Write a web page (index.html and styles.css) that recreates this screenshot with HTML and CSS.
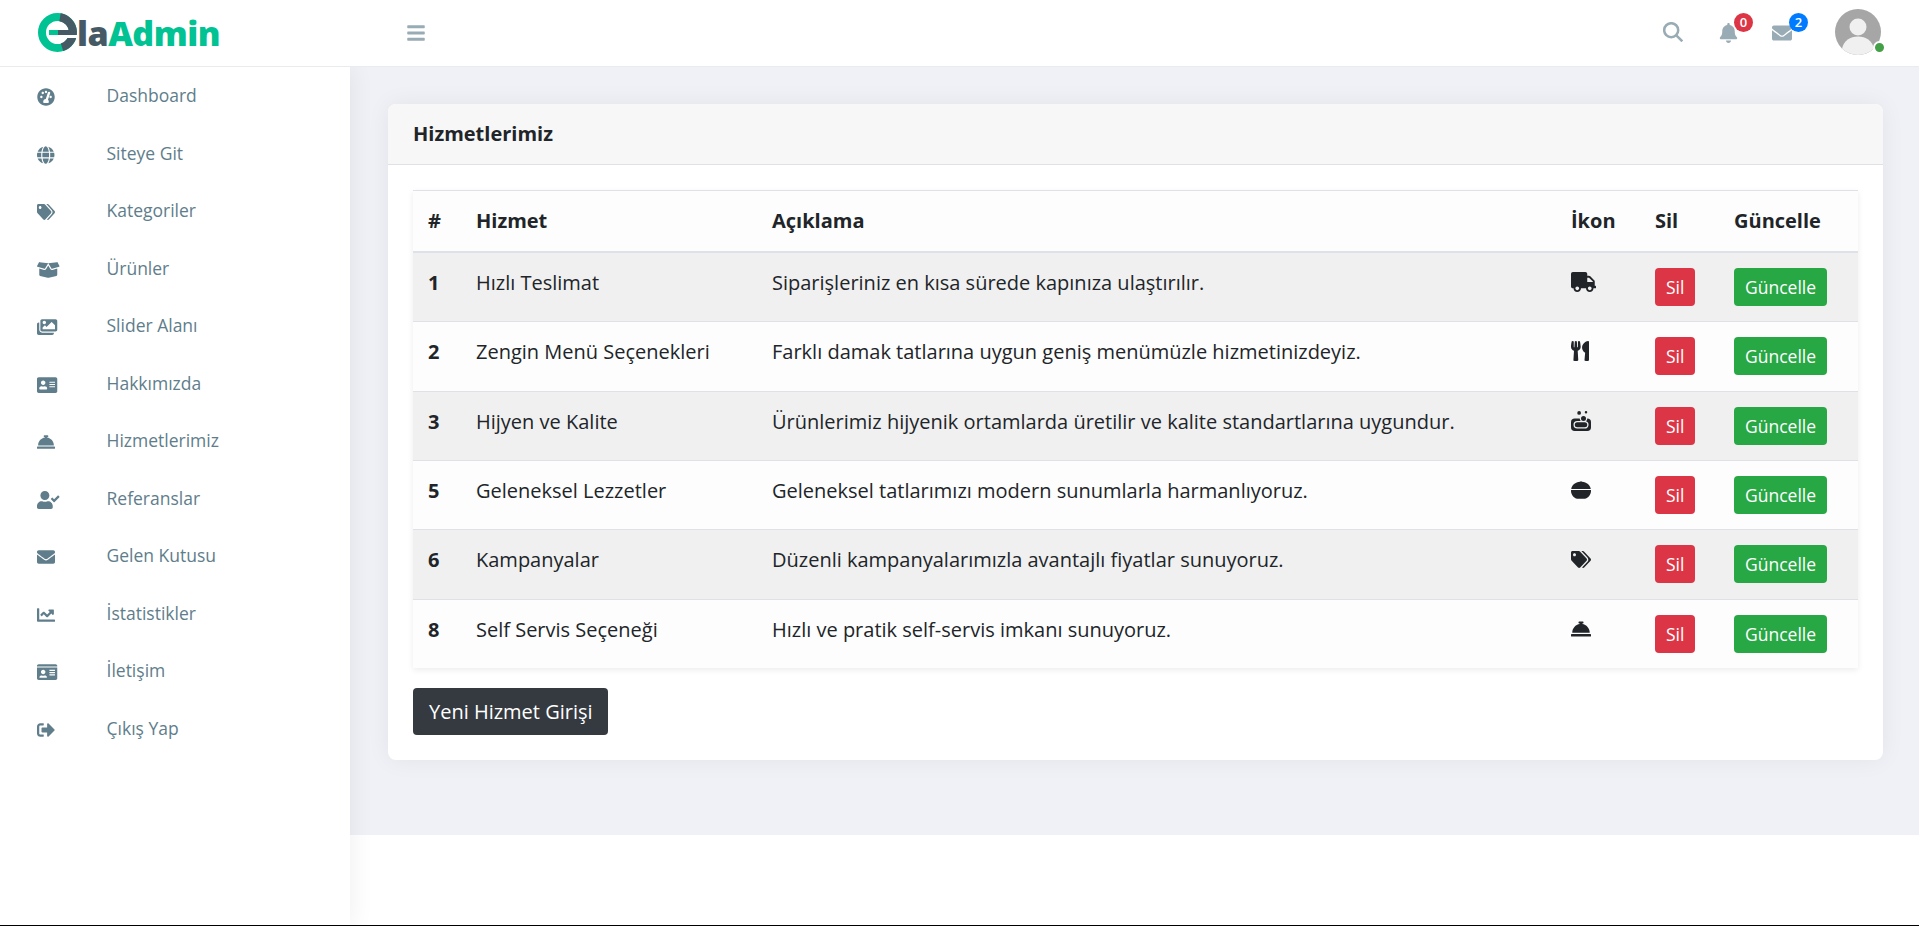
FILE: index.html
```html
<!DOCTYPE html>
<html lang="tr">
<head>
    <meta charset="UTF-8">
    <meta name="viewport" content="width=device-width, initial-scale=1.0">
    <title>Hizmetlerimiz - ElaAdmin</title>
    <link rel="stylesheet" href="styles.css">
</head>
<body>
    <svg class="icon-defs" xmlns="http://www.w3.org/2000/svg">
        <symbol id="i-bars" viewBox="0 0 448 512"><path d="M16 132h416c8.8 0 16-7.2 16-16V76c0-8.8-7.2-16-16-16H16C7.2 60 0 67.2 0 76v40c0 8.8 7.2 16 16 16zm0 160h416c8.8 0 16-7.2 16-16v-40c0-8.8-7.2-16-16-16H16c-8.8 0-16 7.2-16 16v40c0 8.8 7.2 16 16 16zm0 160h416c8.8 0 16-7.2 16-16v-40c0-8.8-7.2-16-16-16H16c-8.8 0-16 7.2-16 16v40c0 8.8 7.2 16 16 16z"/></symbol>
        <symbol id="i-bell" viewBox="0 0 448 512"><path d="M224 512c35.32 0 63.97-28.65 63.97-64H160.03c0 35.35 28.65 64 63.97 64zm215.39-149.71c-19.32-20.76-55.47-51.99-55.47-154.29 0-77.7-54.48-139.9-127.94-155.16V32c0-17.67-14.32-32-31.98-32s-31.98 14.33-31.98 32v20.84C118.56 68.1 64.08 130.3 64.08 208c0 102.3-36.15 133.53-55.47 154.29-6 6.45-8.66 14.16-8.61 21.71.11 16.4 12.98 32 32.1 32h383.8c19.12 0 32-15.6 32.1-32 .05-7.55-2.61-15.27-8.61-21.71z"/></symbol>
        <symbol id="i-envelope" viewBox="0 0 512 512" preserveAspectRatio="xMinYMid meet"><path d="M502.3 190.8c3.9-3.1 9.7-.2 9.7 4.7V400c0 26.5-21.5 48-48 48H48c-26.5 0-48-21.5-48-48V195.6c0-5 5.7-7.8 9.7-4.7 22.4 17.4 52.1 39.5 154.1 113.6 21.1 15.4 56.7 47.8 92.2 47.6 35.7.3 72-32.8 92.3-47.6 102-74.1 131.6-96.3 154-113.7zM256 320c23.2.4 56.6-29.2 73.4-41.4 132.7-96.3 142.8-104.7 173.4-128.7 5.8-4.5 9.2-11.5 9.2-18.9v-19c0-26.5-21.5-48-48-48H48C21.5 64 0 85.5 0 112v19c0 7.4 3.4 14.3 9.2 18.9 30.6 23.9 40.7 32.4 173.4 128.7 16.8 12.2 50.2 41.8 73.4 41.4z"/></symbol>
        <symbol id="i-gauge" viewBox="0 0 512 512" preserveAspectRatio="xMinYMid meet"><path fill-rule="evenodd" d="M256 8C119 8 8 119 8 256s111 248 248 248 248-111 248-248S393 8 256 8zm0 72c20 0 34 14 34 34s-14 34-34 34-34-14-34-34 14-34 34-34zM124 290c-20 0-34-14-34-34s14-34 34-34 34 14 34 34-14 34-34 34zm40-112c-20 0-34-14-34-34s14-34 34-34 34 14 34 34-14 34-34 34zm210-28l-62 184c16 14 24 32 24 52 0 16-4 28-10 40H186c-6-12-10-24-10-40 0-40 32-74 74-76l60-182c6-18 24-26 42-20 18 6 28 24 22 42zm14 140c-20 0-34-14-34-34s14-34 34-34 34 14 34 34-14 34-34 34z"/></symbol>
        <symbol id="i-globe" viewBox="0 0 496 512" preserveAspectRatio="xMinYMid meet"><path d="M336.5 160C322 70.7 287.8 8 248 8s-74 62.7-88.5 152h177zM152 256c0 22.2 1.2 43.5 3.3 64h185.3c2.1-20.5 3.3-41.8 3.3-64s-1.2-43.5-3.3-64H155.3c-2.1 20.5-3.3 41.8-3.3 64zm324.7-96c-28.6-67.9-86.5-120.4-158-141.6 24.4 33.8 41.2 84.7 50 141.6h108zM177.2 18.4C105.8 39.6 47.8 92.1 19.3 160h108c8.7-56.9 25.5-107.8 49.9-141.6zM487.4 192H372.7c2.1 21 3.3 42.5 3.3 64s-1.2 43-3.3 64h114.6c5.5-20.5 8.6-41.8 8.6-64s-3.1-43.5-8.5-64zM120 256c0-21.5 1.2-43 3.3-64H8.6C3.2 212.5 0 233.8 0 256s3.2 43.5 8.6 64h114.6c-2-21-3.2-42.5-3.2-64zm39.5 96c14.5 89.3 48.7 152 88.5 152s74-62.7 88.5-152h-177zm159.3 141.6c71.4-21.2 129.4-73.7 158-141.6h-108c-8.8 56.9-25.6 107.8-50 141.6zM19.3 352c28.6 67.9 86.5 120.4 158 141.6-24.4-33.8-41.2-84.7-50-141.6h-108z"/></symbol>
        <symbol id="i-tags" viewBox="0 0 640 512" preserveAspectRatio="none"><path d="M497.941 225.941L286.059 14.059A48 48 0 0 0 252.118 0H48C21.49 0 0 21.49 0 48v204.118a48 48 0 0 0 14.059 33.941l211.882 211.882c18.744 18.745 49.136 18.746 67.882 0l204.118-204.118c18.745-18.745 18.745-49.137 0-67.882zM112 160c-26.51 0-48-21.49-48-48s21.49-48 48-48 48 21.49 48 48-21.49 48-48 48zm513.941 133.823L421.823 497.941c-18.745 18.745-49.137 18.745-67.882 0l-.36-.36L527.64 323.522c16.999-16.999 26.36-39.6 26.36-63.64s-9.362-46.641-26.36-63.64L331.397 0h48.721a48 48 0 0 1 33.941 14.059l211.882 211.882c18.745 18.745 18.745 49.137 0 67.882z"/></symbol>
        <symbol id="i-box" viewBox="0 0 640 512" preserveAspectRatio="xMinYMid meet"><path d="M425.7 256c-16.9 0-32.8-9-41.4-23.4L320 126l-64.2 106.6c-8.7 14.5-24.6 23.5-41.5 23.5-4.5 0-9-.6-13.3-1.9L64 215v178c0 14.7 10 27.5 24.2 31l216.2 54.1c10.2 2.5 20.9 2.5 31 0L551.8 424c14.2-3.6 24.2-16.4 24.2-31V215l-137 39.1c-4.3 1.3-8.8 1.9-13.3 1.9zm212.6-112.2L586.8 41c-3.1-6.2-9.8-9.8-16.7-8.9L320 64l91.7 152.1c3.8 6.3 11.4 9.3 18.5 7.3l197.9-56.5c9.9-2.9 14.7-13.9 10.2-23.1zM53.2 41L1.7 143.8c-4.6 9.2.3 20.2 10.1 23l197.9 56.5c7.1 2 14.7-1 18.5-7.3L320 64 69.8 32.1c-6.9-.8-13.5 2.7-16.6 8.9z"/></symbol>
        <symbol id="i-images" viewBox="0 0 576 512" preserveAspectRatio="xMinYMid meet"><path d="M480 416v16c0 26.51-21.49 48-48 48H48c-26.51 0-48-21.49-48-48V176c0-26.51 21.49-48 48-48h16v208c0 44.112 35.888 80 80 80h336zm96-80V80c0-26.51-21.49-48-48-48H144c-26.51 0-48 21.49-48 48v256c0 26.51 21.49 48 48 48h384c26.51 0 48-21.49 48-48zM256 128c0 26.51-21.49 48-48 48s-48-21.49-48-48 21.49-48 48-48 48 21.49 48 48zm-96 144l55.515-55.515c4.686-4.686 12.284-4.686 16.971 0L272 256l135.515-135.515c4.686-4.686 12.284-4.686 16.971 0L512 208v112H160v-48z"/></symbol>
        <symbol id="i-address" viewBox="0 0 576 512" preserveAspectRatio="xMinYMid meet"><path d="M528 32H48C21.5 32 0 53.5 0 80v352c0 26.5 21.5 48 48 48h480c26.5 0 48-21.5 48-48V80c0-26.5-21.5-48-48-48zm-352 96c35.3 0 64 28.7 64 64s-28.7 64-64 64-64-28.7-64-64 28.7-64 64-64zm112 236.8c0 10.6-10 19.2-22.4 19.2H86.4C74 384 64 375.4 64 364.8v-19.2c0-31.8 30.1-57.6 67.2-57.6h5c12.3 5.1 25.7 8 39.8 8s27.6-2.9 39.8-8h5c37.1 0 67.2 25.8 67.2 57.6v19.2zM512 312c0 4.4-3.6 8-8 8H360c-4.4 0-8-3.6-8-8v-16c0-4.4 3.6-8 8-8h144c4.4 0 8 3.6 8 8v16zm0-64c0 4.4-3.6 8-8 8H360c-4.4 0-8-3.6-8-8v-16c0-4.4 3.6-8 8-8h144c4.4 0 8 3.6 8 8v16zm0-64c0 4.4-3.6 8-8 8H360c-4.4 0-8-3.6-8-8v-16c0-4.4 3.6-8 8-8h144c4.4 0 8 3.6 8 8v16z"/></symbol>
        <symbol id="i-concierge" viewBox="0 0 512 512" preserveAspectRatio="xMinYMid meet"><path d="M288 130.54V112h16c8.84 0 16-7.16 16-16V80c0-8.84-7.16-16-16-16h-96c-8.84 0-16 7.16-16 16v16c0 8.84 7.16 16 16 16h16v18.54C115.49 146.11 32 239.18 32 352h448c0-112.82-83.49-205.89-192-221.46zM496 384H16c-8.84 0-16 7.16-16 16v32c0 8.84 7.16 16 16 16h480c8.84 0 16-7.16 16-16v-32c0-8.84-7.16-16-16-16z"/></symbol>
        <symbol id="i-usercheck" viewBox="0 0 640 512" preserveAspectRatio="xMinYMid meet"><path d="M224 256c70.7 0 128-57.3 128-128S294.7 0 224 0 96 57.3 96 128s57.3 128 128 128zm89.6 32h-16.7c-22.2 10.2-46.9 16-72.9 16s-50.6-5.8-72.9-16h-16.7C60.2 288 0 348.2 0 422.4V464c0 26.5 21.5 48 48 48h352c26.5 0 48-21.5 48-48v-41.6c0-74.2-60.2-134.4-134.4-134.4zm323-128.4l-27.8-28.1c-4.6-4.7-12.1-4.7-16.8-.1l-104.8 104-45.5-45.8c-4.6-4.7-12.1-4.7-16.8-.1l-28.1 27.9c-4.7 4.6-4.7 12.1-.1 16.8l81.7 82.3c4.6 4.7 12.1 4.7 16.8.1l141.3-140.2c4.6-4.7 4.7-12.2.1-16.8z"/></symbol>
        <symbol id="i-chart" viewBox="0 0 512 512" preserveAspectRatio="xMinYMid meet"><path d="M496 384H64V80c0-8.84-7.16-16-16-16H16C7.16 64 0 71.16 0 80v336c0 17.67 14.33 32 32 32h464c8.84 0 16-7.16 16-16v-32c0-8.84-7.16-16-16-16zM464 96H345.94c-21.38 0-32.09 25.85-16.97 40.97l32.4 32.4L288 242.75l-73.37-73.37c-12.5-12.5-32.76-12.5-45.25 0l-68.69 68.69c-6.25 6.25-6.25 16.38 0 22.63l22.62 22.62c6.25 6.25 16.38 6.25 22.63 0L192 237.25l73.37 73.37c12.5 12.5 32.76 12.5 45.25 0l96-96 32.4 32.4c15.12 15.12 40.97 4.41 40.97-16.97V112c0-8.84-7.16-16-16-16z"/></symbol>
        <symbol id="i-idcard" viewBox="0 0 576 512" preserveAspectRatio="xMinYMid meet"><path d="M528 32H48C21.5 32 0 53.5 0 80v16h576V80c0-26.5-21.5-48-48-48zM0 432c0 26.5 21.5 48 48 48h480c26.5 0 48-21.5 48-48V128H0v304zm352-232c0-4.4 3.6-8 8-8h144c4.4 0 8 3.6 8 8v16c0 4.4-3.6 8-8 8H360c-4.4 0-8-3.6-8-8v-16zm0 64c0-4.4 3.6-8 8-8h144c4.4 0 8 3.6 8 8v16c0 4.4-3.6 8-8 8H360c-4.4 0-8-3.6-8-8v-16zm0 64c0-4.4 3.6-8 8-8h144c4.4 0 8 3.6 8 8v16c0 4.4-3.6 8-8 8H360c-4.4 0-8-3.6-8-8v-16zM176 192c35.3 0 64 28.7 64 64s-28.7 64-64 64-64-28.7-64-64 28.7-64 64-64zM67.1 396.2C75.5 370.5 99.6 352 128 352h8.2c12.3 5.1 25.7 8 39.8 8s27.6-2.9 39.8-8h8.2c28.4 0 52.5 18.5 60.9 44.2 3.2 9.9-5.2 19.8-15.6 19.8H82.7c-10.4 0-18.8-10-15.6-19.8z"/></symbol>
        <symbol id="i-signout" viewBox="0 0 512 512" preserveAspectRatio="xMinYMid meet"><path d="M497 273L329 441c-15 15-41 4.5-41-17v-96H152c-13.3 0-24-10.7-24-24v-96c0-13.3 10.7-24 24-24h136V88c0-21.4 25.9-32 41-17l168 168c9.3 9.4 9.3 24.6 0 34zM192 436v-40c0-6.6-5.4-12-12-12H96c-17.7 0-32-14.3-32-32V160c0-17.7 14.3-32 32-32h84c6.6 0 12-5.4 12-12V76c0-6.6-5.4-12-12-12H96c-53 0-96 43-96 96v192c0 53 43 96 96 96h84c6.6 0 12-5.4 12-12z"/></symbol>
        <symbol id="i-truck" viewBox="0 0 640 512"><path d="M624 352h-16V243.9c0-12.7-5.1-24.9-14.1-33.9L494 110.1c-9-9-21.2-14.1-33.9-14.1H416V48c0-26.5-21.5-48-48-48H48C21.5 0 0 21.5 0 48v320c0 26.5 21.5 48 48 48h16c0 53 43 96 96 96s96-43 96-96h128c0 53 43 96 96 96s96-43 96-96h48c8.8 0 16-7.2 16-16v-32c0-8.8-7.2-16-16-16zM160 464c-26.5 0-48-21.5-48-48s21.5-48 48-48 48 21.5 48 48-21.5 48-48 48zm320 0c-26.5 0-48-21.5-48-48s21.5-48 48-48 48 21.5 48 48-21.5 48-48 48zm80-208H416V144h44.1l99.9 99.9V256z"/></symbol>
        <symbol id="i-utensils" viewBox="0 0 416 512" preserveAspectRatio="none"><path d="M207.9 15.2c.8 4.7 16.1 94.5 16.1 128.8 0 52.3-27.8 89.6-68.9 104.6L168 486.7c.7 13.7-10.2 25.3-24 25.3H80c-13.7 0-24.7-11.5-24-25.3l12.9-238.1C27.7 233.6 0 196.2 0 144 0 109.6 15.3 19.9 16.1 15.2 19.3-5.1 61.4-5.4 64 16.3v141.2c1.3 3.4 15.1 3.2 16 0 1.4-25.3 7.9-139.2 8-141.8 3.3-20.8 44.7-20.8 47.9 0 .2 2.7 6.6 116.5 8 141.8.9 3.2 14.8 3.4 16 0V16.3c2.6-21.6 44.8-21.4 48-1.1zm119.2 285.7l-15 185.1c-1.2 14 9.9 26 23.9 26h56c13.3 0 24-10.7 24-24V24c0-13.2-10.7-24-24-24-82.5 0-221.4 178.5-64.9 300.9z"/></symbol>
        <symbol id="i-soap" viewBox="0 0 512 512"><path d="M416 192a95.42 95.42 0 0 1-30.94 70.21A95.8 95.8 0 0 1 352 448H160a96 96 0 0 1 0-192h88.91A95.3 95.3 0 0 1 224 192H96a96 96 0 0 0-96 96v128a96 96 0 0 0 96 96h320a96 96 0 0 0 96-96V288a96 96 0 0 0-96-96zm-96 64a64 64 0 1 0-64-64 64 64 0 0 0 64 64zM208 96a48 48 0 1 0-48-48 48 48 0 0 0 48 48zm176-32a32 32 0 1 0-32-32 32 32 0 0 0 32 32zM160 288a64 64 0 0 0 0 128h192a64 64 0 0 0 0-128z"/></symbol>
        <symbol id="i-bowl" viewBox="0 0 512 512"><path d="M256 30c-12 0-22 6-26 16C110 60 22 130 6 232h500C490 130 402 60 282 46c-4-10-14-16-26-16zM2 258h508c1 8 2 14 2 22 0 90-70 180-160 200H160C70 460 0 370 0 280c0-8 1-14 2-22z"/></symbol>
    </svg>

    <header class="topbar">
        <a class="brand">
            <svg class="brand-mark" viewBox="0 0 40 40">
                <circle class="mark-ring" cx="19.5" cy="19.5" r="15.5"/>
                <path class="mark-ring-dark" d="M22 4.2A15.5 15.5 0 0 1 24 34.3"/>
                <rect class="mark-green" x="11" y="17" width="9" height="5"/>
                <rect class="mark-dark" x="20" y="17" width="12" height="5"/>
                <rect class="mark-slit" x="28" y="22" width="12" height="3"/>
            </svg>
            <span class="brand-name"><span class="brand-la">la</span>Admin</span>
        </a>
        <button class="menu-toggle"><svg class="ico"><use href="#i-bars"/></svg></button>
        <div class="top-tools">
            <svg class="tool-search" viewBox="0 0 20 20"><circle cx="8.2" cy="8.2" r="7"/><line x1="13.3" y1="13.3" x2="19.3" y2="19.3"/></svg>
            <span class="tool">
                <svg class="ico"><use href="#i-bell"/></svg>
                <span class="badge badge-red">0</span>
            </span>
            <span class="tool tool-mail">
                <svg class="ico"><use href="#i-envelope"/></svg>
                <span class="badge badge-blue">2</span>
            </span>
            <span class="avatar">
                <svg viewBox="0 0 46 46">
                    <circle cx="23" cy="23" r="23" fill="#a6a6a6"/>
                    <circle cx="23" cy="18" r="8.5" fill="#f0f0f0"/>
                    <path d="M7 39.5c2-8 8-12 16-12s14 4 16 12a23 23 0 0 1-32 0z" fill="#f0f0f0"/>
                </svg>
                <span class="online"></span>
            </span>
        </div>
    </header>

    <div class="layout">
        <aside class="sidebar">
            <ul>
                <li><svg class="side-ico"><use href="#i-gauge"/></svg><a>Dashboard</a></li>
                <li><svg class="side-ico"><use href="#i-globe"/></svg><a>Siteye Git</a></li>
                <li><svg class="side-ico side-ico-tags"><use href="#i-tags"/></svg><a>Kategoriler</a></li>
                <li><svg class="side-ico"><use href="#i-box"/></svg><a>Ürünler</a></li>
                <li><svg class="side-ico"><use href="#i-images"/></svg><a>Slider Alanı</a></li>
                <li><svg class="side-ico"><use href="#i-address"/></svg><a>Hakkımızda</a></li>
                <li><svg class="side-ico"><use href="#i-concierge"/></svg><a>Hizmetlerimiz</a></li>
                <li><svg class="side-ico"><use href="#i-usercheck"/></svg><a>Referanslar</a></li>
                <li><svg class="side-ico"><use href="#i-envelope"/></svg><a>Gelen Kutusu</a></li>
                <li><svg class="side-ico"><use href="#i-chart"/></svg><a>İstatistikler</a></li>
                <li><svg class="side-ico"><use href="#i-idcard"/></svg><a>İletişim</a></li>
                <li><svg class="side-ico"><use href="#i-signout"/></svg><a>Çıkış Yap</a></li>
            </ul>
        </aside>

        <div class="page">
            <main class="main-content">
                <section class="card">
                    <div class="card-header">Hizmetlerimiz</div>
                    <div class="card-body">
                        <table class="services">
                            <colgroup>
                                <col class="col-no"><col class="col-name"><col class="col-desc"><col class="col-icon"><col class="col-del"><col class="col-edit">
                            </colgroup>
                            <thead>
                                <tr><th>#</th><th>Hizmet</th><th>Açıklama</th><th>İkon</th><th>Sil</th><th>Güncelle</th></tr>
                            </thead>
                            <tbody>
                                <tr>
                                    <th>1</th><td>Hızlı Teslimat</td><td>Siparişleriniz en kısa sürede kapınıza ulaştırılır.</td>
                                    <td><svg class="row-ico ico-truck"><use href="#i-truck"/></svg></td>
                                    <td><a class="btn btn-red">Sil</a></td><td><a class="btn btn-green">Güncelle</a></td>
                                </tr>
                                <tr>
                                    <th>2</th><td>Zengin Menü Seçenekleri</td><td>Farklı damak tatlarına uygun geniş menümüzle hizmetinizdeyiz.</td>
                                    <td><svg class="row-ico ico-utensils"><use href="#i-utensils"/></svg></td>
                                    <td><a class="btn btn-red">Sil</a></td><td><a class="btn btn-green">Güncelle</a></td>
                                </tr>
                                <tr>
                                    <th>3</th><td>Hijyen ve Kalite</td><td>Ürünlerimiz hijyenik ortamlarda üretilir ve kalite standartlarına uygundur.</td>
                                    <td><svg class="row-ico"><use href="#i-soap"/></svg></td>
                                    <td><a class="btn btn-red">Sil</a></td><td><a class="btn btn-green">Güncelle</a></td>
                                </tr>
                                <tr>
                                    <th>5</th><td>Geleneksel Lezzetler</td><td>Geleneksel tatlarımızı modern sunumlarla harmanlıyoruz.</td>
                                    <td><svg class="row-ico"><use href="#i-bowl"/></svg></td>
                                    <td><a class="btn btn-red">Sil</a></td><td><a class="btn btn-green">Güncelle</a></td>
                                </tr>
                                <tr>
                                    <th>6</th><td>Kampanyalar</td><td>Düzenli kampanyalarımızla avantajlı fiyatlar sunuyoruz.</td>
                                    <td><svg class="row-ico ico-tags"><use href="#i-tags"/></svg></td>
                                    <td><a class="btn btn-red">Sil</a></td><td><a class="btn btn-green">Güncelle</a></td>
                                </tr>
                                <tr>
                                    <th>8</th><td>Self Servis Seçeneği</td><td>Hızlı ve pratik self-servis imkanı sunuyoruz.</td>
                                    <td><svg class="row-ico"><use href="#i-concierge"/></svg></td>
                                    <td><a class="btn btn-red">Sil</a></td><td><a class="btn btn-green">Güncelle</a></td>
                                </tr>
                            </tbody>
                        </table>
                        <a class="btn btn-dark btn-lg">Yeni Hizmet Girişi</a>
                    </div>
                </section>
            </main>
            <footer class="footer"></footer>
        </div>
    </div>
</body>
</html>
```

FILE: styles.css
```css
/* Basic styling */
* {
    box-sizing: border-box;
}
html, body {
    margin: 0;
    padding: 0;
    height: 100%;
}
body {
    font-family: "Open Sans", sans-serif;
    font-size: 16px;
    line-height: 1.5;
    color: #212529;
    background: #fff;
    display: flex;
    flex-direction: column;
    border-bottom: 1px solid #000;
    overflow: hidden;
}
.icon-defs {
    display: none;
}
.ico {
    width: 100%;
    height: 100%;
    fill: currentColor;
    display: block;
}

/* Top bar */
.topbar {
    height: 67px;
    flex-shrink: 0;
    display: flex;
    align-items: center;
    background: #fff;
    border-bottom: 1px solid #e9ecef;
    padding-right: 38px;
    position: relative;
    z-index: 1;
}
.brand {
    width: 407px;
    padding-left: 38px;
    display: flex;
    align-items: center;
}
.brand-mark {
    width: 40px;
    height: 40px;
    flex-shrink: 0;
}
.mark-ring,
.mark-ring-dark {
    fill: none;
    stroke-width: 8;
}
.mark-ring {
    stroke: #00c292;
}
.mark-ring-dark {
    stroke: #455a64;
}
.mark-green {
    fill: #00c292;
}
.mark-dark {
    fill: #455a64;
}
.mark-slit {
    fill: #fff;
}
.brand-name {
    font-weight: 800;
    font-size: 34px;
    line-height: 40px;
    letter-spacing: -0.5px;
    color: #00c292;
    margin-left: -1px;
}
.brand-la {
    color: #455a64;
}
.menu-toggle {
    width: 18px;
    height: 20px;
    padding: 0;
    border: none;
    background: none;
    color: #99abb4;
}
.top-tools {
    margin-left: auto;
    display: flex;
    align-items: center;
}
.tool-search {
    width: 20px;
    height: 20px;
    fill: none;
    stroke: #99abb4;
    stroke-width: 2.5;
    margin-right: 36px;
    margin-bottom: 3px;
}
.tool {
    position: relative;
    width: 19px;
    height: 20px;
    color: #99abb4;
    margin-right: 34px;
}
.tool-mail {
    width: 21px;
    margin-right: 42px;
}
.badge {
    position: absolute;
    top: -10px;
    left: 15px;
    width: 19px;
    height: 19px;
    border-radius: 50%;
    color: #fff;
    font-size: 13px;
    font-weight: 600;
    line-height: 19px;
    text-align: center;
}
.badge-red {
    background: #dc3545;
}
.badge-blue {
    background: #007bff;
    left: 17px;
}
.avatar {
    position: relative;
    width: 46px;
    height: 46px;
    margin-bottom: 2px;
}
.avatar svg {
    display: block;
}
.online {
    position: absolute;
    right: -5px;
    bottom: 1px;
    width: 13px;
    height: 13px;
    border-radius: 50%;
    background: #43a047;
    border: 2px solid #fff;
}

/* Sidebar and page */
.layout {
    flex: 1;
    display: flex;
    min-height: 0;
}
.sidebar {
    width: 350px;
    flex-shrink: 0;
    background: #fff;
    box-shadow: 5px 0 20px rgba(0, 0, 0, 0.05);
    position: relative;
}
.sidebar ul {
    list-style: none;
    margin: 0;
    padding: 0;
}
.sidebar li {
    height: 57.5px;
    padding-bottom: 1px;
    display: flex;
    align-items: center;
    color: #607d8b;
    font-size: 17.5px;
}
.side-ico {
    width: 24px;
    height: 18px;
    margin-left: 37px;
    margin-right: 45.5px;
    margin-top: 4px;
    fill: #607d8b;
}
.side-ico-tags {
    width: 18px;
    height: 16px;
    margin-right: 51.5px;
}
.page {
    flex: 1;
    min-width: 0;
    display: flex;
    flex-direction: column;
}
.main-content {
    background: #eff1f6;
    padding: 37px 36px 75px 38px;
}
.footer {
    flex: 1;
    background: #fff;
}

/* Card */
.card {
    background: #fff;
    border-radius: 8px;
    box-shadow: 0 0 25px rgba(0, 0, 0, 0.06);
}
.card-header {
    height: 61px;
    padding: 0 25px;
    line-height: 60px;
    font-size: 20px;
    font-weight: 700;
    background: #f7f7f7;
    border-bottom: 1px solid #dee2e6;
    border-radius: 8px 8px 0 0;
}
.card-body {
    padding: 25px;
}

/* Table */
.services {
    width: 100%;
    table-layout: fixed;
    border-collapse: collapse;
    box-shadow: 0 2px 6px rgba(0, 0, 0, 0.08);
    margin-bottom: 20px;
}
.col-no { width: 48px; }
.col-name { width: 296px; }
.col-desc { width: 799px; }
.col-icon { width: 84px; }
.col-del { width: 79px; }
.col-edit { width: 139px; }
.services th,
.services td {
    padding: 0 15px;
    font-size: 20px;
    line-height: 24px;
    text-align: left;
    vertical-align: top;
}
.services thead th {
    height: 61px;
    padding-top: 18px;
    font-weight: 700;
    background: #fdfdfd;
    border-top: 1px solid #dee2e6;
    border-bottom: 2px solid #dee2e6;
}
.services tbody tr {
    background: #fdfdfd;
}
.services tbody tr:nth-child(odd) {
    background: #f0f0f0;
}
.services tbody th,
.services tbody td {
    height: 69.33px;
    padding-top: 18px;
    border-top: 1px solid #dee2e6;
}
.services tbody tr:first-child th,
.services tbody tr:first-child td {
    height: 70.33px;
}
.services tbody td:nth-child(4) {
    padding-top: 17px;
}
.services tbody td:nth-child(5),
.services tbody td:nth-child(6) {
    padding-top: 15px;
}
.row-ico {
    display: block;
    width: 20px;
    height: 20px;
    margin-top: 2px;
    fill: #212529;
}
.ico-truck {
    width: 25px;
}
.ico-utensils {
    width: 18px;
}
.ico-tags {
    height: 17px;
    margin-top: 4px;
}

/* Buttons */
.btn {
    display: inline-block;
    padding: 7px 11px;
    font-size: 17.5px;
    line-height: 24px;
    border-radius: 4px;
    color: #fff;
    vertical-align: top;
}
.btn-red {
    background: #dc3545;
}
.btn-green {
    background: #28a745;
}
.btn-dark {
    background: #343a40;
}
.btn-lg {
    padding: 8px 15px 8px 16px;
    font-size: 20px;
    line-height: 31px;
}
```
